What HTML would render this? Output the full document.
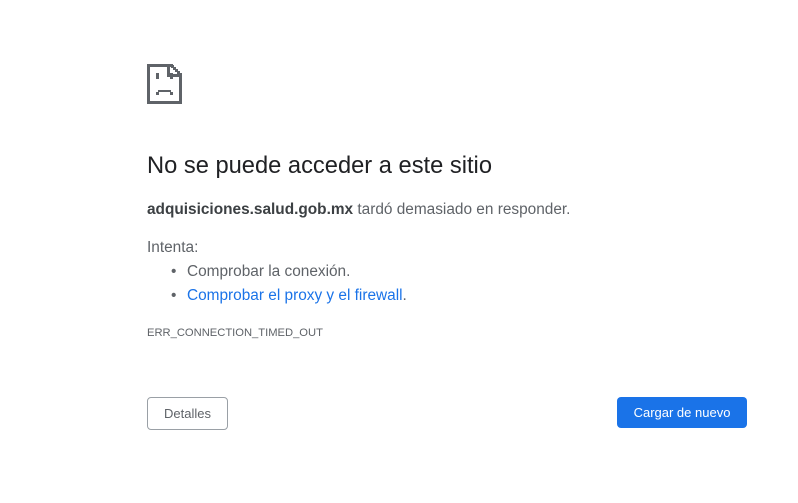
<!DOCTYPE html>
<html><head><meta charset="utf-8"><style>
body{margin:0;background:#fff;font-family:"Liberation Sans",Arial,sans-serif;color:#202124;width:798px;height:503px;overflow:hidden;position:relative}
.a{position:absolute;white-space:nowrap}
h1{position:absolute;left:147px;top:153px;margin:0;font-size:23.7px;font-weight:normal;color:#202124;white-space:nowrap}
.t{font-size:15.4px;color:#5f6368}
.btn{position:absolute;box-sizing:border-box;font-size:13px;display:flex;align-items:center;justify-content:center;border-radius:4px}
</style></head><body>
<svg class="a" style="left:147px;top:64px" width="36" height="40" viewBox="0 0 36 40">
<g fill="#5f6368">
<rect x="0" y="0" width="26" height="3"/>
<rect x="0" y="0" width="3" height="40"/>
<rect x="0" y="37" width="35" height="3"/>
<rect x="32" y="9" width="3" height="31"/>
<rect x="24" y="1" width="3" height="3"/><rect x="26" y="3" width="3" height="3"/><rect x="28" y="5" width="3" height="3"/><rect x="30" y="7" width="3" height="3"/>
<rect x="20" y="0" width="3" height="13"/><rect x="20" y="10" width="15" height="3"/>
<rect x="9" y="9" width="3" height="6"/><rect x="23" y="9" width="3" height="6"/>
<rect x="11" y="26" width="13" height="2"/><rect x="9" y="28" width="3" height="3"/><rect x="23" y="28" width="3" height="3"/>
</g></svg>
<h1>No se puede acceder a este sitio</h1>
<div class="a t" style="left:147px;top:201px"><b style="font-weight:bold;color:#3c4043">adquisiciones.salud.gob.mx</b> tardó demasiado en responder.</div>
<div class="a t" style="left:147px;top:239px">Intenta:</div>
<div class="a t" style="left:171px;top:263px">•</div>
<div class="a t" style="left:187px;top:263px">Comprobar la conexión.</div>
<div class="a t" style="left:171px;top:287px">•</div>
<div class="a t" style="left:187px;top:287px"><span style="color:#1a73e8">Comprobar el proxy y el firewall</span>.</div>
<div class="a" style="left:147px;top:327px;font-size:11.2px;color:#5f6368">ERR_CONNECTION_TIMED_OUT</div>
<div class="btn" style="left:147px;top:397px;width:81px;height:33px;border:1px solid #9aa0a6;color:#5f6368">Detalles</div>
<div class="btn" style="left:617px;top:397px;width:130px;height:31px;background:#1a73e8;color:#fff">Cargar de nuevo</div>
</body></html>
